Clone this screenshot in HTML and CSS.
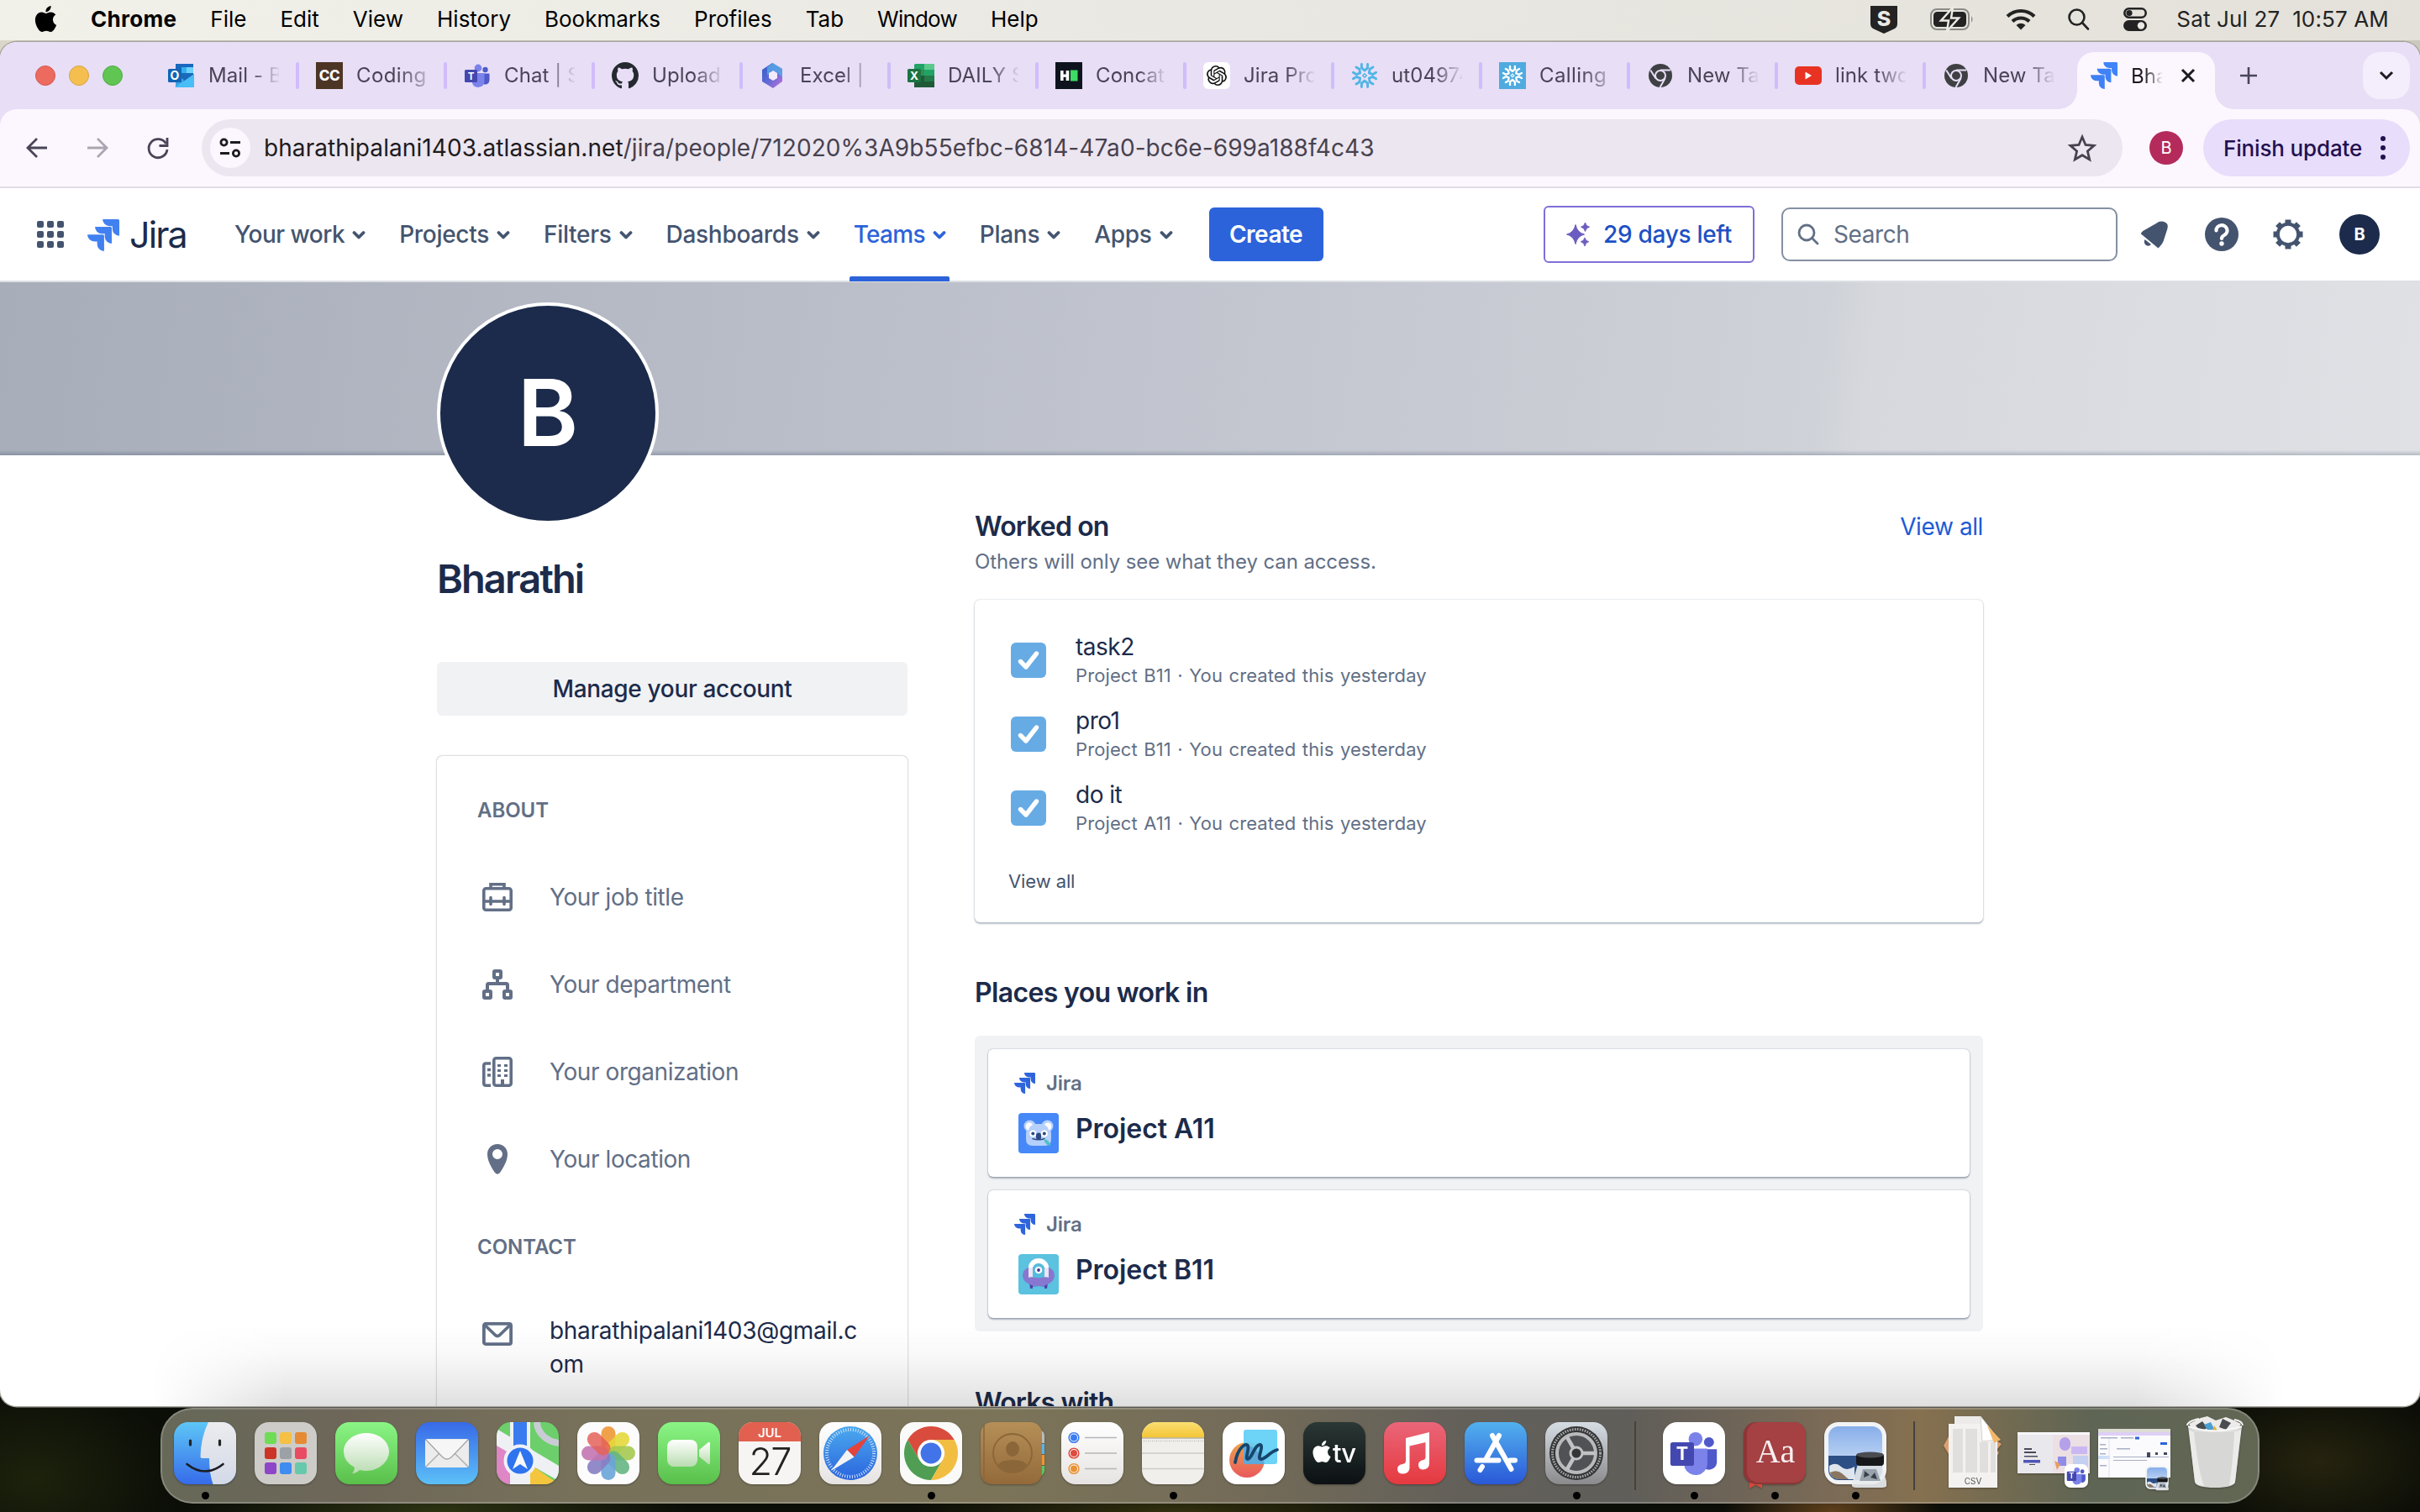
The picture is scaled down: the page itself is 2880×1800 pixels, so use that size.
FILE: index.html
```html
<!DOCTYPE html>
<html lang="en">
<head>
<meta charset="utf-8">
<title>Bharathi - Jira</title>
<link rel="stylesheet" href="styles.css">
</head>
<body>
<svg class="defs" width="0" height="0" aria-hidden="true">
  <defs>
    <linearGradient id="g-jira" x1="1" y1="0" x2="0" y2="1"><stop offset="0" stop-color="#3f86fb"/><stop offset="1" stop-color="#3f7ef0"/></linearGradient>
    <linearGradient id="g-green" x1="0" y1="0" x2="0" y2="1"><stop offset="0" stop-color="#8af585"/><stop offset="1" stop-color="#5abf4b"/></linearGradient>
    <linearGradient id="g-white" x1="0" y1="0" x2="0" y2="1"><stop offset="0" stop-color="#fff"/><stop offset="1" stop-color="#b9dcb0"/></linearGradient>
    <linearGradient id="g-mail" x1="0" y1="0" x2="0" y2="1"><stop offset="0" stop-color="#386ae8"/><stop offset="1" stop-color="#5cc0f7"/></linearGradient>
    <linearGradient id="g-finder" x1="0" y1="0" x2="0" y2="1"><stop offset="0" stop-color="#5ec6f7"/><stop offset="1" stop-color="#366be9"/></linearGradient>
    <linearGradient id="g-face" x1="0" y1="0" x2="0" y2="1"><stop offset="0" stop-color="#ececee"/><stop offset="1" stop-color="#d2d9e8"/></linearGradient>
    <linearGradient id="g-paper" x1="0" y1="0" x2="0" y2="1"><stop offset="0" stop-color="#fff"/><stop offset="1" stop-color="#e6e4e2"/></linearGradient>
    <linearGradient id="g-safari" x1="0" y1="0" x2="0" y2="1"><stop offset="0" stop-color="#4aa9ee"/><stop offset="1" stop-color="#2b64dd"/></linearGradient>
    <linearGradient id="g-store" x1="0" y1="0" x2="0" y2="1"><stop offset="0" stop-color="#52b1ee"/><stop offset="1" stop-color="#2a58d8"/></linearGradient>
    <linearGradient id="g-music" x1="0" y1="0" x2="0" y2="1"><stop offset="0" stop-color="#ea6679"/><stop offset="1" stop-color="#e5393f"/></linearGradient>
    <linearGradient id="g-tv" x1="0" y1="0" x2="0" y2="1"><stop offset="0" stop-color="#2b3835"/><stop offset="1" stop-color="#0c1013"/></linearGradient>
    <linearGradient id="g-notes" x1="0" y1="0" x2="0" y2="1"><stop offset="0" stop-color="#fadf72"/><stop offset="1" stop-color="#f4c535"/></linearGradient>
    <linearGradient id="g-brown" x1="0" y1="0" x2="0" y2="1"><stop offset="0" stop-color="#b58f57"/><stop offset="1" stop-color="#93693a"/></linearGradient>
    <linearGradient id="g-set" x1="0" y1="0" x2="0" y2="1"><stop offset="0" stop-color="#d5dde3"/><stop offset="1" stop-color="#8b8b8d"/></linearGradient>
    <linearGradient id="g-sky" x1="0" y1="0" x2="0" y2="1"><stop offset="0" stop-color="#87aeea"/><stop offset=".55" stop-color="#b6cff2"/></linearGradient>
    <linearGradient id="g-free" x1="0" y1="0" x2="0" y2="1"><stop offset="0" stop-color="#efa34a"/><stop offset="1" stop-color="#e9585d"/></linearGradient>
    <linearGradient id="g-m365" x1="0" y1="0" x2="1" y2="1"><stop offset="0" stop-color="#2c5fc4"/><stop offset=".5" stop-color="#5f6ad6"/><stop offset="1" stop-color="#c272d8"/></linearGradient>
    <clipPath id="c-app"><rect width="74" height="74" rx="17"/></clipPath>
    <symbol id="jira" viewBox="0 0 24 24"><path d="M11.571 11.513H0a5.218 5.218 0 0 0 5.232 5.215h2.13v2.057A5.215 5.215 0 0 0 12.575 24V12.518a1.005 1.005 0 0 0-1.005-1.005zm5.723-5.756H5.736a5.215 5.215 0 0 0 5.215 5.214h2.129v2.058a5.218 5.218 0 0 0 5.215 5.214V6.758a1.001 1.001 0 0 0-1.001-1.001zM23.013 0H11.455a5.215 5.215 0 0 0 5.215 5.215h2.129v2.057A5.215 5.215 0 0 0 24 12.483V1.005A1.001 1.001 0 0 0 23.013 0Z"/></symbol>
    <symbol id="apple" viewBox="0 0 24 24"><path d="M12.152 6.896c-.948 0-2.415-1.078-3.96-1.04-2.04.027-3.91 1.183-4.961 3.014-2.117 3.675-.546 9.103 1.519 12.09 1.013 1.454 2.208 3.09 3.792 3.039 1.52-.065 2.09-.987 3.935-.987 1.831 0 2.35.987 3.96.948 1.637-.026 2.676-1.48 3.676-2.948 1.156-1.688 1.636-3.325 1.662-3.415-.039-.013-3.182-1.221-3.22-4.857-.026-3.04 2.48-4.494 2.597-4.559-1.429-2.09-3.623-2.324-4.39-2.376-2-.156-3.675 1.09-4.61 1.09zM15.53 3.83c.843-1.012 1.4-2.427 1.245-3.83-1.207.052-2.662.805-3.532 1.818-.78.896-1.454 2.338-1.273 3.714 1.338.104 2.715-.688 3.559-1.701"/></symbol>
    <symbol id="chrome-grey" viewBox="0 0 32 32"><circle cx="16" cy="16" r="14" fill="#3f4043"/><circle cx="16" cy="16" r="6" fill="none" stroke="#e8def8" stroke-width="2"/><path d="M16 9.5H28M10.4 19.2 4.2 9.5M21.6 19.2 15.5 30" stroke="#e8def8" stroke-width="2" fill="none"/></symbol>
    <symbol id="teams" viewBox="0 0 32 32"><circle cx="25.5" cy="9" r="3.2" fill="#5059c9"/><circle cx="17" cy="7" r="4.4" fill="#7b83eb"/><path d="M22 13.500h8.500v8.500a5 5 0 0 1-8.500 3z" fill="#5059c9"/><path d="M10 13h14.500v10a7.500 7.500 0 0 1-14.500 2z" fill="#7b83eb"/><rect x="1" y="9" width="15" height="15" rx="1.500" fill="#4348b0"/><text x="8.500" y="20.500" text-anchor="middle" font-size="11.500" font-weight="700" fill="#fff" font-family="Inter, sans-serif">T</text></symbol>
    <symbol id="flake" viewBox="0 0 32 32"><g fill="none" stroke-width="2.900" stroke-linecap="round" stroke-linejoin="round"><path id="arm" d="M12.400 2.400v4.400L16 9.800l3.600-3V2.400"/><use href="#arm" transform="rotate(60 16 16)"/><use href="#arm" transform="rotate(120 16 16)"/><use href="#arm" transform="rotate(180 16 16)"/><use href="#arm" transform="rotate(240 16 16)"/><use href="#arm" transform="rotate(300 16 16)"/></g><path d="M16 13.700 18.300 16 16 18.300 13.700 16z" fill="none" stroke-width="1.400"/></symbol>
    <symbol id="chev" viewBox="0 0 16 16"><path d="M2.500 5 8 10.500 13.500 5" fill="none" stroke="currentColor" stroke-width="3.800" stroke-linecap="round" stroke-linejoin="round"/></symbol>
    <symbol id="check" viewBox="0 0 42 42"><rect width="42" height="42" rx="6" fill="#67abe5"/><path d="M11.500 22.500 18 29 30.500 13" fill="none" stroke="#fff" stroke-width="5.400" stroke-linecap="round" stroke-linejoin="round"/></symbol>
    <symbol id="preview" viewBox="0 0 74 80"><rect width="74" height="74" rx="17" fill="#f2f3f5"/><rect x="5" y="5" width="64" height="64" rx="12" fill="url(#g-sky)"/><path d="M5 40h64v17a12 12 0 0 1-12 12H17A12 12 0 0 1 5 57z" fill="#2c4f86"/><path d="M6 52q8-5 14 1t16 0v15H17Q7 66 6 58z" fill="#dfe5ec"/><path d="M7 60q8-4 14 1l8 7H16Q8 66 7 60z" fill="#8a7660"/><path d="M40 50h28l7 24q0 4-6 4H38q-6 0-5-4z" fill="#e9ecef" fill-opacity=".9"/><path d="M46 56h16l5 14H42z" fill="#9aa3ab"/><path d="m48 58 6 5-7 3zM60 60l3 8-8-2z" fill="#374049"/><rect x="38" y="37" width="33" height="15" rx="4" fill="#17181a"/><ellipse cx="54.500" cy="39" rx="16" ry="3.500" fill="#4a4c50"/></symbol>
  </defs>
</svg>

<header class="menubar">
  <nav class="menus">
    <svg class="apple" width="31" height="31"><use href="#apple"/></svg>
    <b>Chrome</b><span>File</span><span>Edit</span><span>View</span><span>History</span><span>Bookmarks</span><span>Profiles</span><span>Tab</span><span class="win">Window</span><span>Help</span>
  </nav>
  <div class="status">
    <svg width="34" height="34" viewBox="0 0 34 34"><path d="M1 1h32v22q0 3-3 5l-13 6-13-6q-3-2-3-5z" fill="#232323"/><text x="17" y="25" text-anchor="middle" font-size="25" font-weight="800" fill="#ebe9e3" font-family="Inter, sans-serif">S</text></svg>
    <svg width="52" height="26" viewBox="0 0 52 26"><rect x="1" y="1" width="45" height="24" rx="7" fill="none" stroke="#8b8a86" stroke-width="2"/><path d="M49 9q3 4 0 8z" fill="#8b8a86"/><rect x="4" y="4" width="39" height="18" rx="4.500" fill="#232323"/><path d="M27-1 13 14.500h9L20 27 34 11.500h-9z" fill="#232323" stroke="#ebe9e3" stroke-width="2.500"/></svg>
    <svg width="36" height="26" viewBox="0 0 36 26"><g fill="none" stroke="#232323" stroke-width="4.200"><path d="M2 9.500a23 23 0 0 1 32 0"/><path d="M8 15.500a14.500 14.500 0 0 1 20 0"/></g><path d="M12.500 20a8 8 0 0 1 11 0L18 25.500z" fill="#232323"/></svg>
    <svg width="26" height="26" viewBox="0 0 26 26"><g fill="none" stroke="#232323" stroke-width="2.600" stroke-linecap="round"><circle cx="10.500" cy="10.500" r="9"/><path d="m17 17 7 7.500"/></g></svg>
    <svg width="28" height="28" viewBox="0 0 28 28"><rect x="1.300" y="1.300" width="25.400" height="10.400" rx="5.200" fill="none" stroke="#232323" stroke-width="2.600"/><circle cx="7" cy="6.500" r="3.600" fill="#232323"/><rect y="15" width="28" height="13" rx="6.500" fill="#232323"/><circle cx="21" cy="21.500" r="4.200" fill="#ebe9e3"/></svg>
    <span class="clock">Sat Jul 27&nbsp; 10:57 AM</span>
  </div>
</header>

<main class="window">
  <div class="tabstrip">
    <div class="lights"><i class="red"></i><i class="amber"></i><i class="green"></i></div>
    <div class="tabs">
      <div class="tab"><svg width="32" height="32" viewBox="0 0 32 32"><rect x="9" y="2" width="21" height="24" fill="#1a69bd"/><path d="M16 6h14v7H16z" fill="#34b0ef"/><path d="M22 6h8v7h-8z" fill="#6fd2fb"/><path d="M9 14 31 30H9z" fill="#3ca2e6"/><path d="M31 14v16L18 22z" fill="#1c5fae"/><path d="M8 30 31 14v16z" fill="#49bdf5"/><rect y="8" width="16" height="16" rx="1.500" fill="#1265b5"/><text x="8" y="21" text-anchor="middle" font-size="14" font-weight="700" fill="#fff" font-family="Inter, sans-serif">O</text></svg><span>Mail - Bh</span></div>
      <div class="tab"><svg width="32" height="32" viewBox="0 0 32 32"><rect width="32" height="32" fill="#4d3526"/><text x="16" y="22" text-anchor="middle" font-size="17" font-weight="800" fill="#fff" font-family="Inter, sans-serif" letter-spacing="-.5">CC</text></svg><span class="cut">Coding</span></div>
      <div class="tab"><svg width="32" height="32"><use href="#teams"/></svg><span>Chat | S</span></div>
      <div class="tab"><svg width="32" height="32" viewBox="0 0 16 16"><path fill="#24292f" d="M8 0C3.580 0 0 3.580 0 8c0 3.540 2.290 6.530 5.470 7.590.4.070.55-.17.55-.38 0-.19-.01-.82-.01-1.490-2.010.37-2.530-.49-2.690-.94-.09-.23-.48-.94-.82-1.130-.28-.15-.68-.52-.01-.53.63-.01 1.080.58 1.230.82.72 1.210 1.870.87 2.330.66.07-.52.28-.87.51-1.070-1.780-.2-3.640-.89-3.640-3.950 0-.87.31-1.590.82-2.150-.08-.2-.36-1.020.08-2.120 0 0 .67-.21 2.200.82.64-.18 1.320-.27 2-.27s1.360.09 2 .27c1.530-1.040 2.200-.82 2.200-.82.44 1.100.16 1.920.08 2.120.51.56.82 1.270.82 2.150 0 3.070-1.870 3.750-3.650 3.950.29.25.54.73.54 1.480 0 1.070-.01 1.930-.01 2.200 0 .21.15.46.55.38A8.010 8.010 0 0 0 16 8c0-4.420-3.580-8-8-8z"/></svg><span>Upload</span></div>
      <div class="tab"><svg width="32" height="32" viewBox="0 0 32 32"><path d="M15 1 27 8v15L16 31 3 23V9z" fill="url(#g-m365)"/><path d="M16 1l11 7v10l-7-6-6-2-5 6V6z" fill="#57aee8" opacity=".75"/><path d="M16 10l5 3v6l-5 3-5-3v-6z" fill="#f3ebfb"/></svg><span>Excel | U</span></div>
      <div class="tab"><svg width="32" height="32" viewBox="0 0 32 32"><rect x="8" y="2" width="24" height="28" rx="1.500" fill="#21a366"/><path d="M20 2h10.500q1.500 0 1.500 1.500V9H20z" fill="#5bc98b"/><path d="M8 9h12v7H8z" fill="#2f8f56"/><path d="M20 16h12v7H20z" fill="#247a48"/><path d="M8 16h12v7h12v7H8z" fill="#1f5a37"/><rect y="8" width="16" height="16" rx="1.500" fill="#1b7341"/><text x="8" y="21" text-anchor="middle" font-size="13.500" font-weight="700" fill="#fff" font-family="Inter, sans-serif">X</text></svg><span>DAILY S</span></div>
      <div class="tab"><svg width="32" height="32" viewBox="0 0 32 32"><rect width="32" height="32" fill="#0e141e"/><path d="M6 10h3.600v4.500h3V10h3.700v12h-3.700v-4.200h-3V22H6z" fill="#fff"/><rect x="18" y="9.500" width="8.500" height="13" fill="#3ddc63"/></svg><span>Concat</span></div>
      <div class="tab"><svg width="32" height="32" viewBox="0 0 32 32"><rect width="32" height="32" rx="6" fill="#fff"/><path transform="translate(4 4)" fill="#111" d="M22.282 9.821a5.985 5.985 0 0 0-.516-4.911 6.046 6.046 0 0 0-6.510-2.900A6.065 6.065 0 0 0 4.981 4.182a5.985 5.985 0 0 0-3.998 2.900 6.046 6.046 0 0 0 .743 7.097 5.980 5.980 0 0 0 .511 4.911 6.051 6.051 0 0 0 6.515 2.900A5.985 5.985 0 0 0 13.260 24a6.056 6.056 0 0 0 5.772-4.206 5.989 5.989 0 0 0 3.998-2.900 6.056 6.056 0 0 0-.748-7.073zm-9.022 12.608a4.476 4.476 0 0 1-2.876-1.041l.142-.080 4.778-2.758a.795.795 0 0 0 .393-.681v-6.737l2.020 1.169a.071.071 0 0 1 .038.052v5.583a4.504 4.504 0 0 1-4.495 4.494zm-9.661-4.125a4.471 4.471 0 0 1-.535-3.014l.142.085 4.783 2.758a.771.771 0 0 0 .781 0l5.843-3.369v2.332a.080.080 0 0 1-.033.062L9.740 19.950a4.499 4.499 0 0 1-6.141-1.646zM2.341 7.896a4.485 4.485 0 0 1 2.366-1.973V11.600a.766.766 0 0 0 .388.677l5.814 3.354-2.020 1.169a.076.076 0 0 1-.071 0l-4.830-2.787A4.504 4.504 0 0 1 2.341 7.872zm16.596 3.856L13.104 8.364 15.119 7.200a.076.076 0 0 1 .071 0l4.830 2.791a4.494 4.494 0 0 1-.677 8.104v-5.677a.790.790 0 0 0-.407-.667zm2.011-3.023l-.142-.085-4.774-2.782a.776.776 0 0 0-.785 0L9.409 9.230V6.897a.066.066 0 0 1 .028-.062l4.830-2.787a4.499 4.499 0 0 1 6.680 4.660zM8.307 12.863l-2.020-1.164a.080.080 0 0 1-.038-.057V6.074a4.499 4.499 0 0 1 7.376-3.454l-.142.081L8.704 5.459a.795.795 0 0 0-.393.681zm1.098-2.365l2.602-1.500 2.607 1.500v2.999l-2.597 1.500-2.607-1.500Z"/></svg><span>Jira Pro</span></div>
      <div class="tab"><svg width="32" height="32" stroke="#4fb5e6"><use href="#flake"/></svg><span>ut04974</span></div>
      <div class="tab"><svg width="32" height="32" viewBox="0 0 32 32"><rect width="32" height="32" fill="#4fabdf"/><g transform="translate(3 3) scale(.81)" stroke="#fff"><use href="#flake" width="32" height="32"/></g></svg><span class="cut">Calling</span></div>
      <div class="tab"><svg width="32" height="32"><use href="#chrome-grey"/></svg><span>New Tab</span></div>
      <div class="tab"><svg width="32" height="32" viewBox="0 0 32 32"><rect y="5" width="32" height="22" rx="5" fill="#e83323"/><path d="M12.500 11.500 20 16l-7.500 4.500z" fill="#fff"/></svg><span>link two</span></div>
      <div class="tab"><svg width="32" height="32"><use href="#chrome-grey"/></svg><span>New Tab</span></div>
    </div>
    <div class="tab-active"><svg width="32" height="32" fill="url(#g-jira)"><use href="#jira"/></svg><span>Bha</span><svg width="18" height="18" viewBox="0 0 18 18"><path d="m2 2 14 14M16 2 2 16" stroke="#1d1b20" stroke-width="3"/></svg></div>
    <svg class="plus" width="22" height="22" viewBox="0 0 22 22"><path d="M11 1v20M1 11h20" stroke="#4a4458" stroke-width="2.600"/></svg>
    <div class="tab-search"><svg width="18" height="12" viewBox="0 0 18 12"><path d="m2 2 7 7 7-7" fill="none" stroke="#1d1b20" stroke-width="3"/></svg></div>
  </div>

  <div class="toolbar">
    <svg width="26" height="26" viewBox="0 0 26 26"><path d="M13 2 2 13l11 11M2 13h23" fill="none" stroke="#4a4458" stroke-width="2.800"/></svg>
    <svg width="26" height="26" viewBox="0 0 26 26"><path d="m13 2 11 11-11 11M24 13H1" fill="none" stroke="#aba5b2" stroke-width="2.800"/></svg>
    <svg width="28" height="28" viewBox="0 0 28 28"><path d="M23.500 9A11 11 0 1 0 25 16" fill="none" stroke="#4a4458" stroke-width="2.800"/><path d="M25 2v9.500h-9.500" fill="none" stroke="#4a4458" stroke-width="2.800"/></svg>
    <div class="omnibox">
      <span class="tune"><svg width="26" height="24" viewBox="0 0 26 24"><g fill="none" stroke="#1d1b20" stroke-width="2.800"><circle cx="5.500" cy="5.500" r="3.600"/><path d="M13 5.500h12M1 18.500h11"/><circle cx="20" cy="18.500" r="3.600"/></g></svg></span>
      <span class="url"><span>bharathipalani1403.atlassian.net</span>/jira/people/712020%3A9b55efbc-6814-47a0-bc6e-699a188f4c43</span>
      <svg class="star" width="34" height="32" viewBox="0 0 34 32"><path d="m17 3 4 9.500 10 .9-7.600 6.600 2.300 9.900L17 24.700l-8.700 5.200 2.300-9.900L3 13.400l10-.9z" fill="none" stroke="#47424f" stroke-width="2.800"/></svg>
    </div>
    <span class="profile">B</span>
    <div class="update">Finish update<svg width="6" height="30" viewBox="0 0 6 30"><g fill="#23104f"><circle cx="3" cy="4" r="3"/><circle cx="3" cy="15" r="3"/><circle cx="3" cy="26" r="3"/></g></svg></div>
  </div>

  <div class="jira-nav">
    <svg class="grid" width="32" height="32" viewBox="0 0 32 32" fill="#44546f"><rect width="8" height="8" rx="2"/><rect x="12" width="8" height="8" rx="2"/><rect x="24" width="8" height="8" rx="2"/><rect y="12" width="8" height="8" rx="2"/><rect x="12" y="12" width="8" height="8" rx="2"/><rect x="24" y="12" width="8" height="8" rx="2"/><rect y="24" width="8" height="8" rx="2"/><rect x="12" y="24" width="8" height="8" rx="2"/><rect x="24" y="24" width="8" height="8" rx="2"/></svg>
    <svg class="mark" width="38" height="38" fill="#4180f0"><use href="#jira"/></svg>
    <span class="word">Jira</span>
    <nav>
      <a class="snug">Your work<svg width="16" height="16"><use href="#chev"/></svg></a>
      <a>Projects<svg width="16" height="16"><use href="#chev"/></svg></a>
      <a>Filters<svg width="16" height="16"><use href="#chev"/></svg></a>
      <a>Dashboards<svg width="16" height="16"><use href="#chev"/></svg></a>
      <a class="current">Teams<svg width="16" height="16"><use href="#chev"/></svg></a>
      <a>Plans<svg width="16" height="16"><use href="#chev"/></svg></a>
      <a>Apps<svg width="16" height="16"><use href="#chev"/></svg></a>
    </nav>
    <span class="create">Create</span>
    <span class="trial"><svg width="28" height="28" viewBox="0 0 28 28" fill="#6a5cc0"><path d="M11 2.500q2 9.500 10.500 11.500Q13 16 11 25.500 9 16 .5 14 9 12 11 2.500z" stroke="#6a5cc0"/><path d="M22.500 0q.8 4.500 5 5.200-4.200.8-5 5.300-.8-4.500-5-5.300 4.200-.7 5-5.200zM22 18q.7 4 4.700 4.700Q22.700 23.500 22 28q-.7-4.500-4.700-5.300Q21.300 22 22 18z" stroke="#6a5cc0"/></svg>29 days left</span>
    <span class="search"><svg width="26" height="26" viewBox="0 0 26 26"><g fill="none" stroke="#626f86" stroke-width="2.800" stroke-linecap="round"><circle cx="11" cy="11" r="9"/><path d="m18 18 6 6"/></g></svg>Search</span>
    <svg class="bell" width="34" height="34" viewBox="0 0 34 34" fill="#44546f"><path d="M19 4q5-4 10.500-1.500Q34 4.500 32.500 10L28 24q-1 4-6.500 9.500L1 16.500Q1 14 5 12z"/><path d="m5.500 23 7.500 6q-2.500 3-6 1-3.500-3-1.500-7z"/></svg>
    <svg class="help" width="40" height="40" viewBox="0 0 40 40"><circle cx="20" cy="20" r="20" fill="#44546f"/><path d="M13.500 15.500a6.500 6.300 0 1 1 9.500 5.500q-3 1.600-3 4" fill="none" stroke="#fff" stroke-width="4.200" stroke-linecap="round"/><circle cx="20" cy="31" r="2.700" fill="#fff"/></svg>
    <svg class="gear" width="38" height="38" viewBox="0 0 38 38"><g stroke="#44546f" stroke-width="9" stroke-linecap="butt"><path d="M19 1.500v6M19 30.500v6M1.500 19h6M30.500 19h6M6.600 6.600l4.300 4.300M27.100 27.100l4.300 4.300M31.400 6.600l-4.300 4.300M10.900 27.100l-4.300 4.300" stroke-width="7"/></g><circle cx="19" cy="19" r="12.200" fill="#fff" stroke="#44546f" stroke-width="4"/></svg>
    <span class="me">B</span>
  </div>

  <div class="page">
    <div class="banner"></div>
    <div class="columns">
      <aside>
        <div class="avatar">B</div>
        <h1>Bharathi</h1>
        <div class="manage">Manage your account</div>
        <section class="about">
          <h3>ABOUT</h3>
          <div class="row"><svg width="36" height="36" viewBox="0 0 36 36"><g fill="none" stroke="#626f86" stroke-width="3.600"><rect x="1.800" y="7.800" width="32.400" height="25.400" rx="2.500"/><path d="M10 7V2.800h16V7M2 23h32"/><path d="M10 18.500v8M26 18.500v8" stroke-linecap="round"/></g></svg>Your job title</div>
          <div class="row"><svg width="36" height="36" viewBox="0 0 36 36"><g fill="none" stroke="#626f86" stroke-width="4"><rect x="14" y="2" width="8" height="8" rx="1"/><rect x="2" y="26" width="8" height="8" rx="1"/><rect x="26" y="26" width="8" height="8" rx="1"/><path d="M18 10v7M6 25v-6.500q0-1.500 1.500-1.500h21q1.500 0 1.500 1.500V25"/></g></svg>Your department</div>
          <div class="row"><svg width="36" height="36" viewBox="0 0 36 36"><g fill="none" stroke="#626f86" stroke-width="3.600"><rect x="13.800" y="1.800" width="20.400" height="32.400" rx="2.500"/><path d="M10 8H4.500Q1.800 8 1.800 10.500v21q0 2.700 2.700 2.700H10M6 15.500h4M6 22h4"/></g><path d="M18 9h4v3h-4zm8 0h4v3h-4zm-8 6h4v3h-4zm8 0h4v3h-4zm-8 6h4v3h-4zm8 0h4v3h-4zm-4 6h4v8h-4z" fill="#626f86"/></svg>Your organization</div>
          <div class="row"><svg width="36" height="36" viewBox="0 0 36 36"><path fill-rule="evenodd" d="M18 0c7 0 12 5 12 12 0 8-5 16-9 22q-3 3.500-6 0C11 28 6 20 6 12 6 5 11 0 18 0zm0 6a6 6 0 1 0 0 12 6 6 0 0 0 0-12z" fill="#626f86"/></svg>Your location</div>
          <h3 class="contact">CONTACT</h3>
          <div class="mail"><svg width="36" height="28" viewBox="0 0 36 28"><g fill="none" stroke="#626f86" stroke-width="3.800" stroke-linejoin="round"><rect x="1.900" y="1.900" width="32.200" height="24.200" rx="2"/><path d="m3 3.500 12.500 12q2.500 2 5 0L33 3.500"/></g></svg><span>bharathipalani1403@gmail.c<br>om</span></div>
        </section>
      </aside>
      <section class="feed">
        <div class="head"><h2>Worked on</h2><a>View all</a></div>
        <p class="note">Others will only see what they can access.</p>
        <div class="work">
          <div class="item"><svg width="42" height="42"><use href="#check"/></svg><div><p>task2</p><small>Project B11 · You created this yesterday</small></div></div>
          <div class="item"><svg width="42" height="42"><use href="#check"/></svg><div><p>pro1</p><small>Project B11 · You created this yesterday</small></div></div>
          <div class="item"><svg width="42" height="42"><use href="#check"/></svg><div><p>do it</p><small>Project A11 · You created this yesterday</small></div></div>
          <div class="more">View all</div>
        </div>
        <h2 class="places-title">Places you work in</h2>
        <div class="places">
          <div class="place">
            <div class="product"><svg width="25" height="25" fill="#2f65dc"><use href="#jira"/></svg>Jira</div>
            <div class="project"><svg width="48" height="48" viewBox="0 0 48 48"><rect width="48" height="48" rx="4" fill="#4688f7"/><g fill="#b5d0fb"><circle cx="13.500" cy="15.500" r="7"/><circle cx="34.500" cy="15.500" r="7"/><path d="M9 25q0-12 15-12t15 12v6q0 8-8 8H17q-8 0-8-8z"/></g><g fill="#fff"><circle cx="13" cy="16" r="4.500"/><circle cx="35" cy="16" r="4.500"/></g><path d="M12 22q0-9 12-9t12 9z" fill="#b5d0fb"/><g fill="#fff"><circle cx="17.300" cy="24.500" r="4"/><circle cx="30.800" cy="24.500" r="4"/></g><g fill="#2d4a86"><circle cx="17.300" cy="24.500" r="2"/><circle cx="30.800" cy="24.500" r="2"/><rect x="21" y="23.500" width="6" height="8.500" rx="3"/></g><path d="M16.500 30.500q7.500 2.500 15 0" fill="none" stroke="#2d4a86" stroke-width="1.600"/><path d="M30 31q6 0 8.500 8-7-1-8.500-8z" fill="#4fc0c8"/></svg><span>Project A11</span></div>
          </div>
          <div class="place">
            <div class="product"><svg width="25" height="25" fill="#2f65dc"><use href="#jira"/></svg>Jira</div>
            <div class="project"><svg width="48" height="48" viewBox="0 0 48 48"><rect width="48" height="48" rx="4" fill="#5bc2e0"/><path d="M13 34h4v7h-3zM31 34h4l-1 7h-3z" fill="#5343aa"/><path d="M11 34q13 9 26 0l-6 4.500H17z" fill="#5e4db2"/><path d="M5 25.500q0-7 8-10h22q8 3 8 10C43 33 34 38 24 38S5 33 5 25.500z" fill="#8777d0"/><path d="M12 28V17.500a12 12 0 0 1 24 0V28q-2-1-5-.5V18a7 7 0 0 0-14 0v9.500q-3-.5-5 .5z" fill="#ebe4f6"/><path d="M12 16a12 11 0 0 1 24 0h-5a7 5.500 0 0 0-14 0z" fill="#fff"/><path d="M17 27.500V18a7 6.500 0 0 1 14 0v9.500q-7 1.500-14 0z" fill="#54bcdd"/><circle cx="24" cy="19" r="4.300" fill="#fff"/><circle cx="24" cy="19" r="1.900" fill="#403294"/></svg><span>Project B11</span></div>
          </div>
        </div>
        <h2 class="works-with">Works with</h2>
      </section>
    </div>
    <div class="shade"></div>
  </div>
</main>

<footer class="dock">
  <div class="slot on"><svg viewBox="0 0 74 74"><g clip-path="url(#c-app)"><rect width="74" height="74" fill="url(#g-finder)"/><path d="M41 0q-9 18-9.500 41 0 2 2 2H42q0 18 4.500 31H74V0z" fill="url(#g-face)"/></g><path d="M19.500 22v5M54.500 22v5" stroke="#222" stroke-width="3.200" stroke-linecap="round"/><path d="M15.500 50q21.500 17 43 0" fill="none" stroke="#1b1d22" stroke-width="2.600" stroke-linecap="round"/></svg><i></i></div>
  <div class="slot"><svg viewBox="0 0 74 74"><rect width="74" height="74" rx="17" fill="#cdccc8"/><rect x="12" y="12" width="14" height="14" rx="3" fill="#6fdc55"/><rect x="30" y="12" width="14" height="14" rx="3" fill="#f5c043"/><rect x="48" y="12" width="14" height="14" rx="3" fill="#e68a35"/><rect x="12" y="30" width="14" height="14" rx="3" fill="#cc3428"/><rect x="30" y="30" width="14" height="14" rx="3" fill="#9ba1a5"/><rect x="48" y="30" width="14" height="14" rx="3" fill="#e94c62"/><rect x="12" y="48" width="14" height="14" rx="3" fill="#8f45c8"/><rect x="30" y="48" width="14" height="14" rx="3" fill="#3f8cf0"/><rect x="48" y="48" width="14" height="14" rx="3" fill="#67c9ab"/></svg></div>
  <div class="slot"><svg viewBox="0 0 74 74"><rect width="74" height="74" rx="17" fill="url(#g-green)"/><path d="M37 13c15 0 27 10 27 22S52 58 37 58q-4 0-8-1-4 4-9 4 3-3 3-7-13-7-13-19C10 23 22 13 37 13z" fill="url(#g-white)"/></svg></div>
  <div class="slot"><svg viewBox="0 0 74 74"><rect width="74" height="74" rx="17" fill="url(#g-mail)"/><rect x="11" y="20" width="52" height="34" rx="3" fill="#ececec"/><path d="m12 53 16-16M62 53 46 37" stroke="#aaa" stroke-width="1.300"/><path d="m12 21 19 20q6 6 12 0l19-20" fill="#f6f6f6" stroke="#a5a5a5" stroke-width="1.300"/></svg></div>
  <div class="slot"><svg viewBox="0 0 74 74"><g clip-path="url(#c-app)"><rect width="74" height="74" fill="#6ccf6b"/><path d="M0 26l24 14v34H0z" fill="#df86c6"/><path d="M40 74V50l34 24z" fill="#f3c63e"/><path d="M0 8l74 44v18L0 28z" fill="#eef0f4"/><path d="M16 0h24v74H16z" fill="#eef0f4"/><path d="M20 0h16v46H20z" fill="#3a7cf0"/><path d="M48 0a30 26 0 0 0 26 25" fill="none" stroke="#c9ccd4" stroke-width="8"/><circle cx="28" cy="46" r="17.500" fill="#2f74ee" stroke="#eef1f8" stroke-width="4"/><path d="m28 34 9 22-9-6-9 6z" fill="#f6f8fc"/></g></svg></div>
  <div class="slot"><svg viewBox="0 0 74 74"><rect width="74" height="74" rx="17" fill="#fcfcfc"/><g style="mix-blend-mode:multiply"><rect x="28.500" y="5" width="17" height="32" rx="8.500" fill="#f29a38" opacity=".9"/><rect x="28.500" y="5" width="17" height="32" rx="8.500" fill="#e8db3b" opacity=".9" transform="rotate(45 37 37)"/><rect x="28.500" y="5" width="17" height="32" rx="8.500" fill="#a8cc52" opacity=".9" transform="rotate(90 37 37)"/><rect x="28.500" y="5" width="17" height="32" rx="8.500" fill="#67b884" opacity=".9" transform="rotate(135 37 37)"/><rect x="28.500" y="5" width="17" height="32" rx="8.500" fill="#6ba6dc" opacity=".9" transform="rotate(180 37 37)"/><rect x="28.500" y="5" width="17" height="32" rx="8.500" fill="#8a7fc6" opacity=".9" transform="rotate(225 37 37)"/><rect x="28.500" y="5" width="17" height="32" rx="8.500" fill="#c678b4" opacity=".9" transform="rotate(270 37 37)"/><rect x="28.500" y="5" width="17" height="32" rx="8.500" fill="#e8635a" opacity=".85" transform="rotate(315 37 37)"/></g></svg></div>
  <div class="slot"><svg viewBox="0 0 74 74"><rect width="74" height="74" rx="17" fill="url(#g-green)"/><rect x="11" y="21" width="36" height="32" rx="8" fill="url(#g-white)"/><path d="m49 33 11-9q2-1 2 1v24q0 2-2 1l-11-9z" fill="url(#g-white)"/></svg></div>
  <div class="slot"><svg viewBox="0 0 74 74"><g clip-path="url(#c-app)"><rect width="74" height="74" fill="#f7f5f3"/><rect width="74" height="23" fill="#e2604f"/></g><text x="37" y="18" text-anchor="middle" font-size="15" font-weight="600" fill="#fff" font-family="Inter, sans-serif">JUL</text><text x="37" y="63" text-anchor="middle" font-size="45" font-weight="300" letter-spacing="-2" fill="#222" font-family="Inter, sans-serif">27</text></svg></div>
  <div class="slot"><svg viewBox="0 0 74 74"><rect width="74" height="74" rx="17" fill="url(#g-paper)"/><circle cx="37" cy="37" r="32" fill="url(#g-safari)"/><circle cx="37" cy="37" r="28" fill="none" stroke="#cfe4fb" stroke-width="4" stroke-dasharray="1 1.930"/><path d="M60 16 41.500 41.500 33 33z" fill="#e3433c"/><path d="M14 58 33 33l8.500 8.500z" fill="#f4f4f6"/></svg></div>
  <div class="slot on"><svg viewBox="0 0 74 74"><rect width="74" height="74" rx="17" fill="#fafaf8"/><g transform="translate(5 5) scale(1.333)"><path d="M3.200 12A24 24 0 0 1 44.800 12H24A12 12 0 0 0 13.600 30z" fill="#d94c3d"/><path d="M3.200 12 13.600 30A12 12 0 0 0 34.400 30L24 48A24 24 0 0 1 3.200 12z" fill="#4f9e53"/><path d="M44.800 12A24 24 0 0 1 24 48L34.400 30A12 12 0 0 0 24 12z" fill="#f2be42"/><circle cx="24" cy="24" r="11.600" fill="#fff"/><circle cx="24" cy="24" r="9.300" fill="#4273e8"/></g></svg><i></i></div>
  <div class="slot"><svg viewBox="0 0 74 74"><path d="M66 10h6q4 2 4 6v9H66z" fill="#b9bcbc"/><path d="M66 26h10v12H66z" fill="#5cb3e6"/><path d="M66 39h10v12H66z" fill="#ef9434"/><path d="M66 52h10v6q-1 5-5 6h-5z" fill="#5cc860"/><rect width="73" height="74" rx="14" fill="url(#g-brown)"/><path d="M4 3v68" stroke="#8c673a" stroke-width="1.500"/><circle cx="38" cy="37" r="23" fill="none" stroke="#8a6638" stroke-width="1.800"/><ellipse cx="38" cy="32" rx="8" ry="9" fill="#8a6638"/><path d="M21 51q3-6 17-6t17 6q-7 9-17 9t-17-9z" fill="#8a6638"/></svg></div>
  <div class="slot"><svg viewBox="0 0 74 74"><rect width="74" height="74" rx="17" fill="url(#g-paper)"/><path d="M28 18.500h38M28 37h38M28 55.500h38" stroke="#b5b6b9" stroke-width="1.500"/><g stroke-width="1.600"><circle cx="15" cy="18.500" r="5.800" fill="#fff" stroke="#3a7bf0"/><circle cx="15" cy="37" r="5.800" fill="#fff" stroke="#df4a3f"/><circle cx="15" cy="55.500" r="5.800" fill="#fff" stroke="#e89235"/></g><circle cx="15" cy="18.500" r="4" fill="#3a7bf0"/><circle cx="15" cy="37" r="4" fill="#df4a3f"/><circle cx="15" cy="55.500" r="4" fill="#e89235"/></svg></div>
  <div class="slot on"><svg viewBox="0 0 74 74"><g clip-path="url(#c-app)"><rect width="74" height="74" fill="#f0efec"/><rect width="74" height="18.500" fill="url(#g-notes)"/><path d="M0 19h74" stroke="#9b9686" stroke-width="1.200"/><path d="M2 22.500h72" stroke="#bdbbb6" stroke-width="1.500" stroke-dasharray="1 1.500"/><path d="M0 37h74M0 55.500h74" stroke="#cdccca" stroke-width="1.500"/></g></svg><i></i></div>
  <div class="slot"><svg viewBox="0 0 74 74"><rect width="74" height="74" rx="17" fill="#fff"/><circle cx="29" cy="45" r="21" fill="url(#g-free)"/><rect x="25" y="9" width="40" height="41" rx="3" fill="#62d0f6" fill-opacity=".93"/><path d="M25 27q16 0 25 23H28q-3 0-3-3z" fill="#5b9fd6" opacity=".8"/><path d="M15 48C18 30 28 24 30 28c2 5-4 16 0 16 5 0 8-18 15-17 4 2-4 16 0 17 6 1 11-9 20-11" fill="none" stroke="#16466d" stroke-width="3.800" stroke-linecap="round"/></svg></div>
  <div class="slot"><svg viewBox="0 0 74 74"><rect width="74" height="74" rx="17" fill="url(#g-tv)"/><svg x="9" y="22" width="26" height="26" fill="#fff"><use href="#apple"/></svg><text x="48.500" y="48" text-anchor="middle" font-size="31" font-weight="500" letter-spacing="-1" fill="#fff" font-family="Inter, sans-serif">tv</text></svg></div>
  <div class="slot"><svg viewBox="0 0 74 74"><rect width="74" height="74" rx="17" fill="url(#g-music)"/><path d="M26 19 54 12v37q0 7-7 7.500-6 0-6-5.500 0-5 6-6 2.500-.5 2.500-3V24l-19 4.500V55q-1 6-7.500 6.500-7 0-7-5.500 0-5 6-6 4-.7 4-4z" fill="#fff"/></svg></div>
  <div class="slot"><svg viewBox="0 0 74 74"><rect width="74" height="74" rx="17" fill="url(#g-store)"/><g stroke="#fff" stroke-width="6" stroke-linecap="round"><path d="M41 16 26 43M33 16l22.500 40M14.500 45.500h26M54 45.500h6M21 53l-2.500 4"/></g></svg></div>
  <div class="slot on"><svg viewBox="0 0 74 74"><rect width="74" height="74" rx="17" fill="url(#g-set)"/><circle cx="37" cy="37" r="32" fill="#343536"/><circle cx="37" cy="37" r="28.500" fill="none" stroke="#a7a9ab" stroke-width="3" stroke-dasharray="1.600 1.400"/><circle cx="37" cy="37" r="23" fill="#505255" stroke="#b8babc" stroke-width="4"/><path d="M37 37h22M37 37 26 18M37 37 26 56" stroke="#c0c2c4" stroke-width="4.500"/><circle cx="37" cy="37" r="7" fill="#343536" stroke="#c0c2c4" stroke-width="3"/></svg><i></i></div>
  <div class="rule"></div>
  <div class="slot on"><svg viewBox="0 0 74 74"><rect width="74" height="74" rx="17" fill="#fff"/><svg x="7" y="7" width="60" height="60"><use href="#teams"/></svg></svg><i></i></div>
  <div class="slot on"><svg viewBox="0 0 74 74"><path d="M7 66h15v13l-7.500-4.500L7 79z" fill="#d6493c"/><rect width="74" height="74" rx="15" fill="#8f3537"/><rect x="4" width="70" height="72" rx="14" fill="#a54043"/><text x="38" y="48" text-anchor="middle" font-size="40" fill="#f6efee" font-family="'Liberation Serif', serif">Aa</text></svg><i></i></div>
  <div class="slot on"><svg viewBox="0 0 74 74"><use href="#preview" width="74" height="80"/></svg><i></i></div>
  <div class="rule"></div>
  <div class="slot"><svg viewBox="0 0 74 74"><path d="M2 28 12 10 22 40 8 38zM58 18l13 8-10 12zM60 30l8 6-6 12z" fill="#dca071"/><path d="M15-7h32v20H15z" fill="#ecebe9"/><path d="M8 2h38l20 20v56H8z" fill="#f3f2f1"/><path d="M13 8h12v52H13zM28 8h14v52H28zM45 24h10v36H45zM58 24h6v36h-6z" fill="#e0dfde"/><path d="M46-7 68 21l-20 2z" fill="#fff" stroke="#d3d1ce"/><path d="m54 4 16 17-8 4z" fill="#f2b76a"/><text x="37" y="74" text-anchor="middle" font-size="10" fill="#555" font-family="Inter, sans-serif">CSV</text></svg></div>
  <div class="slot"><svg viewBox="0 0 74 74"><rect x="-6" y="12" width="86" height="49" fill="#e9e8ec"/><path d="M-6 12h86v3H-6z" fill="#f7f7f9"/><path d="M2 31h9v2H2zm0 4h14v2H2zm0 5h16v1.500H2zm6 10h7v1H8z" fill="#4a4a5a"/><rect x="1" y="45" width="20" height="3.500" fill="#5054b8"/><path d="M36 15h44v46H36z" fill="#ece0e4"/><rect x="44" y="18" width="13" height="16" rx="6.500" fill="#b5a0ea"/><rect x="58" y="29" width="19" height="9" fill="#cbb8f2"/><rect x="42" y="41" width="10" height="11" fill="#8f8de6"/><rect x="60" y="40" width="18" height="14" fill="#c5cff0"/><path d="M38 46l7 4-4 7z" fill="#e69d62"/><rect x="50" y="50" width="28" height="28" rx="7" fill="#fff"/><svg x="52" y="52" width="24" height="24"><use href="#teams"/></svg></svg></div>
  <div class="slot"><svg viewBox="0 0 74 74"><rect x="-6" y="8" width="86" height="58" fill="#fbfbfd"/><path d="M-6 8h86v4H-6z" fill="#dcdcd4"/><path d="M-6 12h86v4H-6z" fill="#ddcff5"/><path d="M-3 18h20v1.500H-3zm24 0h15v1.500H21zM-4 26h7v1.500h-7zm0 5h9v1.500h-9zm0 6h7v1.500h-7zm0 14h8v1.500h-8zm20-20h16v1.500H16zm-4 10h66v1H12zm0 4h40v1H12z" fill="#a9b0c6"/><rect x="38" y="17.500" width="5" height="3" fill="#2c63da"/><rect x="68" y="24" width="8" height="3" fill="#2c63da"/><rect x="-6" y="40" width="14" height="4" fill="#cfdff8"/><path d="M7 20v46" stroke="#dfe1ea"/><path d="M52 36h4v6h-4zm10 0h3v3h-3zm10 0h4v3h-4z" fill="#3f4a60"/><svg x="50" y="52" width="28" height="30" viewBox="0 0 74 80"><use href="#preview" width="74" height="80"/></svg></svg></div>
  <div class="slot"><svg viewBox="0 0 74 74"><path d="M6 2 20-5l8-2 10 5 12-4 10 4 8 4-6 10H12z" fill="#ecebea"/><path d="m14 4 8-5 6 8-8 4zM46-4l10 5-6 8-8-3z" fill="#4a4c50"/><path d="m24 3 8-3 4 8-7 3z" fill="#4b9ed0"/><path d="m36 4 4 6-6 1z" fill="#e0b040"/><path d="M5 5q32 10 64 0l-8 66q-1 7-24 7t-24-7z" fill="#dddddc" fill-opacity=".96"/><path d="M12 12q6 50 12 64-10-1-11-5L6 9zM60 12q-2 40-6 63 7-1 7-4l7-62z" fill="#f4f4f4" opacity=".7"/><path d="M4 4q0-5 14-8M70 4q0-5-10-7" fill="none" stroke="#f4f4f4" stroke-width="2"/><path d="M5 5q32 11 64 0" fill="none" stroke="#f7f7f7" stroke-width="2"/></svg></div>
</footer>
</body>
</html>
```
FILE: styles.css
```css
* { box-sizing: border-box; }
body {
  margin: 0; width: 2880px; height: 1800px; overflow: hidden;
  font-family: Inter, "Noto Sans", sans-serif; font-size: 28px; color: #1c2b4b;
  background:
    linear-gradient(90deg, #d9d8c8, #cbc9be) 0 0 / 100% 100px no-repeat,
    radial-gradient(ellipse 130px 60px at 2180px 1800px, #5e3f1b, transparent),
    radial-gradient(ellipse 320px 40px at 1400px 1800px, #32300f, transparent),
    radial-gradient(ellipse 300px 60px at 520px 1800px, #2c3312, transparent),
    radial-gradient(ellipse 180px 120px at 40px 1760px, #1d220c, transparent),
    radial-gradient(ellipse 160px 90px at 2760px 1740px, #26240f, transparent),
    #0b0d07;
}
svg { display: block; flex: none; overflow: visible; }
.defs { position: absolute; }
h1, h2, h3, p { margin: 0; }

/* macOS menu bar */
.menubar {
  height: 48px; padding: 0 37px 3px 39px; display: flex; justify-content: space-between; align-items: center;
  background: linear-gradient(90deg, #f1f0e9, #e9e8e2 50%, #e4e1da); font-size: 26px; color: #000;
}
.menus { display: flex; align-items: center; gap: 40px; }
.menus b { letter-spacing: .3px; margin-left: -2px; }
.menus .win { letter-spacing: -.8px; }
.status { display: flex; align-items: center; gap: 38px; color: #232323; }
.status svg:nth-child(5) { margin-left: 2px; }
.clock { letter-spacing: .14px; margin-left: -3px; white-space: pre; }

/* browser window */
.window {
  margin-top: 2px; height: 1624px; overflow: hidden; border-radius: 20px; background: #fff;
  box-shadow: 0 0 0 1.5px #a6a49d; display: flex; flex-direction: column;
}
.tabstrip { height: 80px; flex: none; display: flex; align-items: center; background: #e8def6; color: #4a4458; font-size: 24px; }
.lights { width: 178px; padding-left: 42px; display: flex; gap: 16px; }
.lights i { width: 24px; height: 24px; border-radius: 50%; }
.red { background: #ec6a5e; border: 1px solid #d5574c; }
.amber { background: #f4bf4f; border: 1px solid #d9a33c; }
.green { background: #61c554; border: 1px solid #4eab41; }
.tabs { display: flex; }
.tab { width: 176px; height: 32px; padding-left: 22px; display: flex; align-items: center; gap: 16px; position: relative; }
.tab + .tab::before { content: ""; position: absolute; left: -2px; top: 0; width: 4px; height: 32px; border-radius: 2px; background: #d0bcfb; }
.tab span { width: 84px; overflow: hidden; white-space: nowrap; line-height: 32px; letter-spacing: .1px; -webkit-mask-image: linear-gradient(90deg, #000 50px, transparent 86px); mask-image: linear-gradient(90deg, #000 50px, transparent 86px); }
.tab .cut { letter-spacing: .4px; -webkit-mask-image: linear-gradient(90deg, #000 50px, transparent 96px); mask-image: linear-gradient(90deg, #000 50px, transparent 96px); }
.tab-active {
  position: relative; width: 164px; height: 68px; margin: 12px 0 0 6px; padding: 0 23px 12px 16px;
  display: flex; align-items: center; background: #fcf7fe; border-radius: 20px 20px 0 0; color: #1d1b20;
}
.tab-active::before, .tab-active::after { content: ""; position: absolute; bottom: 0; width: 22px; height: 22px; }
.tab-active::before { left: -22px; background: radial-gradient(circle at 0 0, transparent 21.500px, #fcf7fe 22px); }
.tab-active::after { right: -22px; background: radial-gradient(circle at 100% 0, transparent 21.500px, #fcf7fe 22px); }
.tab-active span { margin: 0 auto 0 16px; width: 38px; overflow: hidden; -webkit-mask-image: linear-gradient(90deg, #000 16px, transparent 38px); mask-image: linear-gradient(90deg, #000 16px, transparent 38px); }
.plus { margin-left: 29px; }
.tab-search { margin-left: auto; margin-right: 12px; width: 56px; height: 56px; border-radius: 20px; background: #f4eefc; display: flex; align-items: center; justify-content: center; }

.toolbar {
  height: 94px; flex: none; padding: 0 12px 0 31px; display: flex; align-items: center;
  background: #e8def6; position: relative; z-index: 0; border-bottom: 2px solid #e1dce8;
}
.toolbar::before { content: ""; position: absolute; inset: 0; z-index: -1; background: #fcf7fe; border-radius: 20px 20px 0 0; }
.toolbar > svg { margin-right: 46px; }
.toolbar > svg:nth-of-type(2) { margin-right: 45px; }
.toolbar > svg:nth-of-type(3) { margin-right: 38px; }
.omnibox { width: 2286px; height: 68px; padding: 0 31px 0 10px; display: flex; align-items: center; border-radius: 34px; background: #ece6f0; color: #47424f; }
.tune { width: 48px; height: 48px; border-radius: 50%; background: #fcf7fe; display: flex; align-items: center; justify-content: center; }
.url { margin-left: 16px; flex: 1; letter-spacing: .08px; }
.url span { color: #1d1b20; }
.profile { width: 40px; height: 40px; margin-left: 32px; border-radius: 50%; background: #b42b5b; color: #fff; font-size: 20px; line-height: 40px; text-align: center; }
.update { margin-left: auto; width: 246px; height: 68px; padding: 0 29px 0 24px; border-radius: 34px; background: #e8ddfb; color: #23104f; font-size: 26px; font-weight: 500; letter-spacing: -.15px; display: flex; align-items: center; justify-content: space-between; white-space: nowrap; }

/* Jira navigation */
.jira-nav { height: 112px; flex: none; padding: 0 48px 0 44px; border-bottom: 2px solid #dcdfe4; display: flex; align-items: center; color: #44546f; font-weight: 500; }
.mark { margin: 2px 0 0 28px; }
.word { width: 138px; margin-left: 12px; font-size: 43px; font-weight: 430; letter-spacing: -1.9px; color: #1c2b4b; line-height: 50px; }
.jira-nav nav { align-self: stretch; display: flex; gap: 40px; margin-left: -13px; }
.jira-nav a { position: relative; display: flex; align-items: center; gap: 9px; letter-spacing: -.3px; }
.jira-nav a svg { margin-top: 2px; }
.jira-nav .snug { letter-spacing: -.5px; }
.jira-nav .current { color: #2c63da; letter-spacing: -.7px; }
.current::after { content: ""; position: absolute; left: -5px; right: -4px; bottom: -1px; height: 6px; background: #2c63da; border-radius: 2px 2px 0 0; }
.create { width: 136px; height: 64px; margin-left: 43px; border-radius: 6px; background: #2c63da; color: #fff; font-weight: 600; letter-spacing: -.5px; line-height: 64px; text-align: center; }
.trial { width: 251px; height: 68px; margin-left: auto; border: 2px solid #7f6fd6; border-radius: 6px; color: #1d50c4; letter-spacing: -.3px; display: flex; align-items: center; justify-content: center; gap: 16px; white-space: nowrap; }
.search { width: 400px; height: 64px; margin-left: 32px; padding-left: 17px; border: 2px solid #8590a2; border-radius: 10px; color: #626f86; font-weight: 400; letter-spacing: -.4px; display: flex; align-items: center; gap: 17px; }
.bell { margin-left: 27px; }
.help { margin-left: 43px; }
.gear { margin-left: 40px; }
.me { width: 48px; height: 48px; margin-left: 42px; border-radius: 50%; background: #1c2b4b; color: #fff; font-size: 20px; font-weight: 700; line-height: 48px; text-align: center; }

/* profile page */
.page { flex: 1; min-height: 0; overflow: hidden; position: relative; }
.banner { height: 206px; background: linear-gradient(rgba(9,30,66,0) 200px, rgba(9,30,66,.2)), linear-gradient(97deg, #a7adb9, #bbbfca 36%, #cbced5 68%, #cfd2d8 75%, #d6d8dd 77%, #dfe1e5); }
.columns { padding-left: 520px; display: grid; grid-template-columns: 560px 1200px; gap: 80px; }
.avatar { position: relative; width: 264px; height: 264px; margin-top: -182px; border: 4px solid #fff; border-radius: 50%; background: #1c2b4b; color: #fff; font-size: 110px; font-weight: 600; line-height: 254px; text-align: center; }
h1 { margin-top: 37px; font-size: 47px; font-weight: 600; line-height: 56px; letter-spacing: -1.950px; }
.manage { height: 64px; margin-top: 71px; border-radius: 6px; background: #f1f2f4; font-weight: 500; letter-spacing: -.33px; line-height: 65px; text-align: center; }
.about { height: 900px; margin-top: 48px; padding: 49px 48px 0; border-radius: 6px; color: #626f86; box-shadow: 0 0 2px rgba(9,30,66,.5); letter-spacing: -.42px; }
h3 { font-size: 24px; font-weight: 600; line-height: 32px; letter-spacing: -.05px; margin-bottom: 35px; }
.row { height: 104px; padding-left: 6px; display: flex; align-items: center; gap: 44px; }
.contact { margin: 37px 0 63px; }
.mail { padding-left: 6px; display: flex; gap: 44px; color: #1c2b4b; line-height: 40px; letter-spacing: -.3px; white-space: nowrap; }
.mail svg { margin-top: 10px; }

.head { margin-top: 65px; display: flex; align-items: center; justify-content: space-between; }
.head a { color: #1d5bd6; letter-spacing: -.4px; }
h2 { font-size: 32px; font-weight: 600; line-height: 40px; letter-spacing: -.85px; }
.note { margin-top: 6px; font-size: 24px; line-height: 32px; letter-spacing: -.1px; color: #626f86; }
.work { height: 384px; margin-top: 29px; padding: 27px 40px 0; border-radius: 6px; box-shadow: 0 2px 2px rgba(9,30,66,.25), 0 0 2px rgba(9,30,66,.31); }
.item { height: 88px; padding: 1px 0 0 3px; display: flex; align-items: center; gap: 35px; }
.item p { line-height: 32px; letter-spacing: -.5px; margin-top: 2px; }
.item small { display: block; margin-top: 2px; font-size: 22px; line-height: 32px; letter-spacing: .1px; word-spacing: 1.2px; color: #626f86; }
.more { margin-top: 28px; font-size: 22px; line-height: 32px; letter-spacing: -.1px; color: #44546f; }
.places-title { margin-top: 64px; letter-spacing: -.65px; }
.places { margin-top: 31px; padding: 16px; border-radius: 6px; background: #f1f2f4; display: flex; flex-direction: column; gap: 16px; }
.place { height: 152px; padding: 28px 31px; border-radius: 6px; background: #fff; box-shadow: 0 2px 2px rgba(9,30,66,.3), 0 0 2px rgba(9,30,66,.35); }
.product { display: flex; align-items: center; gap: 13px; font-size: 24px; font-weight: 600; line-height: 24px; letter-spacing: -.17px; color: #626f86; }
.project { margin: 23px 0 0 5px; display: flex; gap: 20px; font-size: 32px; font-weight: 600; line-height: 38px; letter-spacing: -.05px; }
.works-with { margin-top: 65px; }
.shade {
  position: absolute; left: 180px; right: 160px; bottom: 0; height: 96px; background: linear-gradient(transparent, rgba(0,0,0,.025) 35%, rgba(0,0,0,.07) 68%, rgba(0,0,0,.125));
  -webkit-mask-image: linear-gradient(90deg, transparent, #000 160px, #000 2360px, transparent); mask-image: linear-gradient(90deg, transparent, #000 160px, #000 2360px, transparent);
}

/* dock */
.dock {
  width: 2498px; height: 114px; margin: 2px 0 0 191px; padding: 0 3px; display: flex; border: 2px solid rgba(255,255,255,.22); border-radius: 38px;
  background: linear-gradient(90deg, #666858, #6e6759 9%, #77715a 20%, #7b7459 40%, #736b58 52%, #63605a 62%, #605e59 70%, #7c6b56 80%, #85704f 84%, #5f6554 92%, #626754);
}
.slot { width: 96px; padding-top: 15px; display: flex; flex-direction: column; align-items: center; }
.slot > svg { width: 74px; height: 74px; filter: drop-shadow(0 1px 1px rgba(0,0,0,.3)); }
.slot i { width: 9px; height: 9px; margin-top: 9px; border-radius: 50%; background: #000; }
.rule { width: 2px; height: 82px; margin: 14px 21px 0; background: #45423a; }
```
